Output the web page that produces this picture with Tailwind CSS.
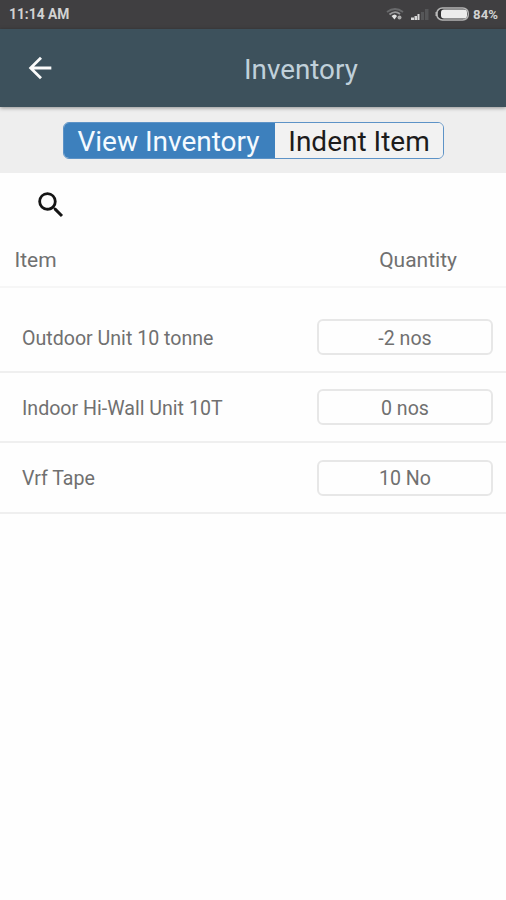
<!DOCTYPE html>
<html lang="en">
<head>
<meta charset="utf-8">
<title>Inventory</title>
<script src="https://cdn.jsdelivr.net/npm/@tailwindcss/browser@4"></script>
</head>
<body class="w-[506px] h-[900px] overflow-hidden bg-[#fefefe] font-['Roboto',sans-serif] text-[#707070]">
<div class="h-[29px] bg-[#403f41] flex items-center pl-[9px] pr-[8px] text-[#d2d2d2]">
  <span class="text-[13.8px] font-bold whitespace-nowrap">11:14 AM</span>
  <div class="ml-auto flex items-center">
    <svg class="w-[18px] h-[14px] mr-[7px]" viewBox="0 0 18 14" fill="none">
      <path d="M1 5Q9-1 17 5" stroke="#68696b" stroke-width="1.800"/>
      <path d="M3.500 7.500Q9 3 14 7" stroke="#98989a" stroke-width="1.800"/>
      <path d="M5.500 9Q9 6 11 9L8.500 12.500Z" fill="#e2e2e2"/>
      <circle cx="13.500" cy="10.500" r="2" fill="#aaa"/>
    </svg>
    <svg class="w-[18px] h-[14px] mr-[6px]" viewBox="0 0 18 14">
      <path d="M0 10.500h3V13H0zM3.500 9H6v4H3.500zM6.500 7h2v6h-2z" fill="#d8d8d8"/>
      <path d="M10 5h3v8h-3zM14 2h3.500v11H14z" fill="#555658"/>
    </svg>
    <svg class="w-[35px] h-[14px] mr-[3px]" viewBox="0 0 35 14">
      <rect x="1.800" y="1" width="31.500" height="12" rx="5.500" fill="#303032" stroke="#b5b5b5" stroke-width="1.500"/>
      <path d="M.5 5h2v4h-2z" fill="#bbb"/>
      <rect x="6" y="2.500" width="26" height="9" rx="3" fill="#ececec"/>
    </svg>
    <span class="text-[13.2px] font-bold">84%</span>
  </div>
</div>
<header class="relative h-[78px] bg-[#3d515c] flex items-center shadow-[0_1px_4px_rgba(0,0,0,0.4)]">
  <svg class="w-[34px] h-[34px] ml-[23px]" viewBox="0 0 24 24" fill="#fafafa"><path d="M20 11H7.830l5.590-5.590L12 4l-8 8 8 8 1.410-1.410L7.830 13H20z"/></svg>
  <h1 class="ml-[187px] pt-[4px] text-[27.800px] leading-[32px] text-[#c0d0da]">Inventory</h1>
</header>
<div class="h-[66px] bg-[#eeeeee] pt-[15px] pl-[63px]">
  <div class="flex w-[381px] h-[37px] rounded-[6px] border border-[#5d93c7] overflow-hidden text-[28px] leading-[38px] whitespace-nowrap">
    <div class="w-[211px] pr-[2px] bg-[#3d80bd] text-[#f4faff] text-center">View Inventory</div>
    <div class="flex-1 bg-[#f2f2f2] text-[#1c1c1c] text-center">Indent Item</div>
  </div>
</div>
<main>
  <div class="h-[61px] pl-[34px] pt-[15px]">
    <svg class="w-[34px] h-[34px]" viewBox="0 0 24 24" fill="#151515"><path d="M15.500 14h-.79l-.28-.27A6.470 6.470 0 0 0 16 9.500 6.500 6.500 0 1 0 9.500 16c1.610 0 3.090-.59 4.230-1.570l.27.28v.79l5 4.990L20.490 19zm-6 0C7.010 14 5 11.990 5 9.500S7.010 5 9.500 5 14 7.010 14 9.500 11.990 14 9.500 14z"/></svg>
  </div>
  <div class="h-[54px] flex justify-between pl-[14.500px] pr-[49px] pt-[13.500px] text-[21px] leading-[25px] border-b-2 border-[#f6f6f6]">
    <span>Item</span><span>Quantity</span>
  </div>
  <div class="h-[85px] pt-[14px] flex items-center justify-between pl-[22px] pr-[13px] border-b-2 border-[#efefef] text-[19.600px]">
    <span class="pt-[4px]">Outdoor Unit 10 tonne</span>
    <span class="w-[176px] h-[36px] border-2 border-[#e7e7e7] rounded-[6px] flex items-center justify-center pt-[4px]">-2 nos</span>
  </div>
  <div class="h-[70px] flex items-center justify-between pl-[22px] pr-[13px] border-b-2 border-[#efefef] text-[19.600px]">
    <span class="pt-[4px]">Indoor Hi-Wall Unit 10T</span>
    <span class="w-[176px] h-[36px] border-2 border-[#e7e7e7] rounded-[6px] flex items-center justify-center pt-[4px]">0 nos</span>
  </div>
  <div class="h-[71px] flex items-center justify-between pl-[22px] pr-[13px] border-b-2 border-[#efefef] text-[19.600px]">
    <span class="pt-[2px]">Vrf Tape</span>
    <span class="w-[176px] h-[36px] border-2 border-[#e7e7e7] rounded-[6px] flex items-center justify-center pt-[2px]">10 No</span>
  </div>
</main>
</body>
</html>
